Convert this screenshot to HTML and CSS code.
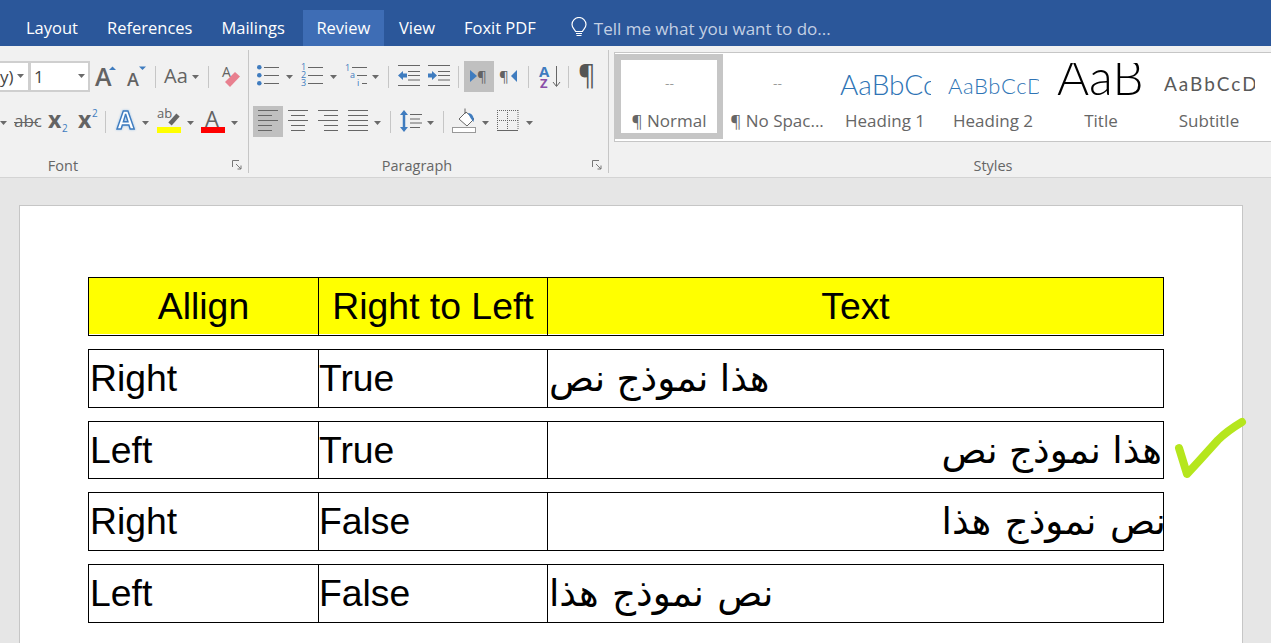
FILE: index.html
```html
<!DOCTYPE html>
<html lang="en">
<head>
<meta charset="utf-8">
<title>Word</title>
<link rel="stylesheet" href="styles.css">
</head>
<body>
<header class="tabs">
  <span class="tab">Layout</span>
  <span class="tab">References</span>
  <span class="tab">Mailings</span>
  <span class="tab tab-active">Review</span>
  <span class="tab">View</span>
  <span class="tab">Foxit PDF</span>
  <span class="tell">
    <svg width="16" height="22" viewBox="0 0 16 22"><path d="M4.6 14.5C3.6 12 1 10.800 1 7.500A7 7 0 0 1 15 7.500C15 10.800 12.400 12 11.400 14.500ZM5 16.500H11M5.500 18.500H10.500" fill="none" stroke="#fff" stroke-width="1.200"/></svg>
    Tell me what you want to do...
  </span>
</header>

<section class="ribbon">
  <div class="group group-font">
    <div class="row">
      <div class="combo combo-a"><span class="combo-text">y)</span><svg width="8" height="5"><path class="caret" d="M0 0H7L3.500 4Z"/></svg></div>
      <div class="combo combo-b"><span class="combo-text">1</span><svg width="8" height="5"><path class="caret" d="M0 0H7L3.500 4Z"/></svg></div>
      <svg width="32" height="31"><text class="ic ic-semi" x="5" y="25" font-size="25">A</text><path class="blue" d="M19 9L22.500 5.500L26 9Z"/></svg>
      <svg width="28" height="31"><text class="ic ic-semi" x="5" y="25" font-size="18">A</text><path class="blue" d="M17 5.500H24L20.500 9Z"/></svg>
      <i class="sep"></i>
      <svg width="42" height="31"><text class="ic" x="3" y="22" font-size="20">Aa</text><path class="caret" d="M31 14H38L34.500 18Z"/></svg>
      <i class="sep"></i>
      <svg width="34" height="31"><text class="ic" x="8" y="16" font-size="14">A</text><path d="M11 21L21 11L26 15.500L16 26Z" fill="#e8808f"/></svg>
    </div>
    <div class="row">
      <svg width="10" height="31"><path class="caret" d="M0 15H7L3.500 19Z"/></svg>
      <svg width="34" height="31"><text class="ic" x="4" y="21" font-size="17">abc</text><path class="line" d="M4 16.500H28"/></svg>
      <svg width="30" height="31"><text class="ic ic-bold" x="4" y="22" font-size="23">x</text><text class="ic-blue" x="18" y="26" font-size="10">2</text></svg>
      <svg width="26" height="31"><text class="ic ic-bold" x="4" y="22" font-size="23">x</text><text class="ic-blue" x="18" y="11" font-size="10">2</text></svg>
      <i class="sep"></i>
      <svg width="43" height="31"><text class="ic-outline" x="6" y="23" font-size="25">A</text><path class="caret" d="M31 15H38L34.500 19Z"/></svg>
      <svg width="44" height="31"><text class="ic" x="3" y="12" font-size="13">ab</text><path d="M16 18L24 9" stroke="#666" stroke-width="4.500" fill="none"/><rect x="3" y="21" width="24" height="6" fill="#ff0"/><path class="caret" d="M33 15H40L36.500 19Z"/></svg>
      <svg width="50" height="31"><text class="ic" x="7" y="21" font-size="22">A</text><rect x="3" y="21" width="24" height="6" fill="#f00"/><path class="caret" d="M33 15H40L36.500 19Z"/></svg>
    </div>
    <span class="group-label">Font</span>
    <svg class="launcher" width="10" height="10"><path d="M.5 7V.5H7M4 4L9 9M9 5.500V9H5.500" fill="none" stroke="#777"/></svg>
  </div>

  <div class="group group-para">
    <div class="row">
      <svg width="44" height="31"><g class="blue"><circle cx="6.300" cy="6.300" r="2.300"/><circle cx="6.300" cy="14.300" r="2.300"/><circle cx="6.300" cy="22.300" r="2.300"/></g><path class="line" d="M11 6.500H26M11 14.500H26M11 22.500H26"/><path class="caret" d="M33 14H40L36.500 18Z"/></svg>
      <svg width="43" height="31"><g class="ic-blue" font-size="9"><text x="4" y="9">1</text><text x="4" y="17">2</text><text x="4" y="25">3</text></g><path class="line" d="M11 6.500H26M11 14.500H26M11 22.500H26"/><path class="caret" d="M33 14H40L36.500 18Z"/></svg>
      <svg width="43" height="31"><g class="ic-blue" font-size="9"><text x="5" y="10">1</text><text x="10" y="17">a</text><text x="17" y="25">i</text></g><path class="line" d="M12 6.500H27M17 14.500H27M22 22.500H27"/><path class="caret" d="M32 14H39L35.500 18Z"/></svg>
      <i class="sep"></i>
      <svg width="30" height="31"><path class="line" d="M4 4.500H26M14 10.500H26M14 14.500H26M14 19H26M4 24.500H26"/><path class="blue" d="M4 14.500L9 10V12.500H13V16.500H9V19Z"/></svg>
      <svg width="29" height="31"><path class="line" d="M4 4.500H26M14 10.500H26M14 14.500H26M14 19H26M4 24.500H26"/><path class="blue" d="M13 14.500L8 10V12.500H4V16.500H8V19Z"/></svg>
      <i class="sep"></i>
      <svg class="on" width="30" height="31"><path class="blue" d="M6 9L13 15L6 21Z"/><text class="ic" x="13" y="21" font-size="15">¶</text></svg>
      <svg width="29" height="31"><text class="ic" x="5" y="21" font-size="15">¶</text><path class="blue" d="M23 9L17 15L23 21Z"/></svg>
      <i class="sep"></i>
      <svg width="29" height="31"><text class="ic-sort-a" x="5" y="16" font-size="15">A</text><text class="ic-sort-z" x="6" y="27" font-size="13">Z</text><path class="line" d="M22.500 5V25M19 21L22.500 25.500L26 21"/></svg>
      <i class="sep"></i>
      <svg width="30" height="31"><text class="ic ic-pil" x="4" y="24" font-size="27">¶</text></svg>
    </div>
    <div class="row">
      <svg class="on" width="30" height="31"><path class="line" d="M5 4.500H25M5 9.500H19M5 14.500H25M5 19.500H19M5 24.500H19"/></svg>
      <svg width="30" height="31"><path class="line" d="M5 4.500H25M8 9.500H22M5 14.500H25M8 19.500H22M8 24.500H22"/></svg>
      <svg width="30" height="31"><path class="line" d="M5 4.500H25M11 9.500H25M5 14.500H25M11 19.500H25M11 24.500H25"/></svg>
      <svg width="42" height="31"><path class="line" d="M5 4.500H25M5 9.500H25M5 14.500H25M5 19.500H25M5 24.500H25"/><path class="caret" d="M31 15H38L34.500 19Z"/></svg>
      <i class="sep"></i>
      <svg width="42" height="31"><path d="M8 7V23" stroke="#3f7cbf" stroke-width="2.500"/><path class="blue" d="M4 9L8 4L12 9ZM4 21L8 26L12 21Z"/><path class="line" d="M14 8.500H26M14 13H24M14 17H26M14 21.500H24"/><path class="caret" d="M31 15H38L34.500 19Z"/></svg>
      <i class="sep"></i>
      <svg width="44" height="31"><path d="M10 13L17 6L25 13L18 20Z" fill="#fff" stroke="#666"/><path d="M16 8V2.500" stroke="#666" fill="none"/><path class="blue" d="M19 7C23 7 25.500 11 24.500 16L21.500 12Z"/><rect x="3.500" y="21.500" width="23" height="5" fill="#fff" stroke="#999"/><path class="caret" d="M33 15H40L36.500 19Z"/></svg>
      <svg width="47" height="31"><path d="M4.500 4V24M14.500 4V24M25 4V24M4 4.500H25M4 14.500H25" fill="none" stroke="#666" stroke-dasharray="1 1"/><path class="line" d="M4 24.500H25"/><path class="caret" d="M33 15H40L36.500 19Z"/></svg>
    </div>
    <span class="group-label">Paragraph</span>
    <svg class="launcher" width="10" height="10"><path d="M.5 7V.5H7M4 4L9 9M9 5.500V9H5.500" fill="none" stroke="#777"/></svg>
  </div>

  <div class="group group-styles">
    <div class="gallery">
      <div class="style style-on"><span class="preview pv-dash">--</span><span class="style-label">¶ Normal</span></div>
      <div class="style"><span class="preview pv-dash">--</span><span class="style-label">¶ No Spac...</span></div>
      <div class="style"><span class="preview pv-h1">AaBbCcDd</span><span class="style-label">Heading 1</span></div>
      <div class="style"><span class="preview pv-h2">AaBbCcDd</span><span class="style-label">Heading 2</span></div>
      <div class="style"><span class="preview pv-title">AaB</span><span class="style-label">Title</span></div>
      <div class="style"><span class="preview pv-sub">AaBbCcDd</span><span class="style-label">Subtitle</span></div>
    </div>
    <span class="group-label">Styles</span>
  </div>
</section>

<main class="canvas">
  <article class="page">
    <div class="doc-table">
      <div class="doc-row doc-head"><div class="cell">Allign</div><div class="cell">Right to Left</div><div class="cell">Text</div></div>
      <div class="doc-row"><div class="cell">Right</div><div class="cell">True</div><div class="cell ar ar-left" dir="rtl">هذا نموذج نص</div></div>
      <div class="doc-row"><div class="cell">Left</div><div class="cell">True</div><div class="cell ar ar-right" dir="rtl">هذا نموذج نص</div></div>
      <div class="doc-row"><div class="cell">Right</div><div class="cell">False</div><div class="cell ar ar-right ar-over ar-wide" dir="rtl">نص نموذج هذا</div></div>
      <div class="doc-row"><div class="cell">Left</div><div class="cell">False</div><div class="cell ar ar-left ar-wide" dir="rtl">نص نموذج هذا</div></div>
    </div>
    <svg class="check" width="80" height="70" viewBox="0 0 80 70"><path d="M5 31L13 57L25 44L44 23C50 17 58 11 68 5" fill="none" stroke="#b5e61d" stroke-width="8" stroke-linecap="round" stroke-linejoin="round"/></svg>
  </article>
</main>
</body>
</html>
```
FILE: styles.css
```css
* { box-sizing: border-box; }
html, body { margin: 0; height: 100%; overflow: hidden; }
body { display: flex; flex-direction: column; font-family: "Open Sans", "Liberation Sans", sans-serif; background: #e6e6e6; }

.tabs { flex: none; height: 46px; background: #2b579a; display: flex; align-items: flex-end; padding-left: 13px; gap: 3px; color: #fff; font-size: 16.5px; }
.tab { height: 36px; line-height: 36px; padding: 0 13px; white-space: nowrap; }
.tab-active { background: #3e6db5; min-width: 81px; margin-left: 2px; margin-right: -1px; text-align: center; }
.tell { display: flex; align-items: center; gap: 7px; height: 36px; margin-left: 19px; color: #c3d0e4; font-size: 17px; white-space: nowrap; }

.ribbon { flex: none; height: 132px; background: #f1f1f1; border-bottom: 1px solid #d4d4d4; display: flex; }
.group { position: relative; padding-top: 15px; }
.group::after { content: ""; position: absolute; right: 0; top: 4px; height: 123px; width: 1px; background: #c6c6c6; }
.group-font { width: 249px; }
.group-para { width: 360px; padding-left: 4px; }
.group-styles { flex: 1; padding: 6px 0 0 5px; }
.group-styles::after { display: none; }
.row { display: flex; height: 31px; margin-bottom: 14px; }
.row svg { flex: none; display: block; }
.on { background: #c0c0c0; }
.sep { flex: none; width: 1px; height: 22px; margin: 5px 5px 0; background: #c6c6c6; }
.group-label { position: absolute; left: 0; right: 0; bottom: 1px; text-align: center; font-size: 14.5px; line-height: 20px; color: #666; }
.group-font .group-label { padding-right: 123px; }
.group-para .group-label { padding-right: 24px; }
.group-styles .group-label { padding-left: 106px; }
.launcher { position: absolute; right: 7px; bottom: 7px; }

.caret { fill: #6a6a6a; }
.blue { fill: #3f7cbf; }
.line { fill: none; stroke: #666; stroke-width: 1; }
.ic { fill: #636363; font-family: "Open Sans", sans-serif; }
.ic-semi { font-weight: 600; }
.ic-bold { font-weight: 700; }
.ic-pil { fill: #555; }
.ic-blue { fill: #3f7cbf; font-family: "Open Sans", sans-serif; }
.ic-outline { fill: #fff; stroke: #3f7cbf; stroke-width: 1.4; font-family: "Open Sans", sans-serif; font-weight: 700; filter: drop-shadow(0 0 1px #9cc3e8); }
.ic-sort-a { fill: #3f7cbf; font-weight: 700; font-family: "Open Sans", sans-serif; }
.ic-sort-z { fill: #8a4fa8; font-weight: 700; font-family: "Open Sans", sans-serif; }

.combo { height: 31px; background: #fff; border: 2px solid #cfcfcf; display: flex; align-items: center; justify-content: space-between; color: #444; font-size: 17px; flex: none; }
.combo-a { width: 30px; border-left: 0; padding: 0 3px 0 0; }
.combo-b { width: 60px; padding: 0 2px 0 3px; border-left-width: 1px; }
.combo-text { line-height: 1; }

.gallery { height: 90px; background: #fff; border: 1px solid #c6c6c6; border-right: 0; display: flex; }
.style { width: 108px; height: 85px; margin-top: 1px; display: flex; flex-direction: column; align-items: center; flex: none; padding-top: 9px; }
.style-on { box-shadow: inset 0 0 0 6px #c6c6c6; }
.preview { display: block; width: 91px; height: 48px; margin-left: 1px; overflow: hidden; white-space: nowrap; font-family: Lato, sans-serif; font-weight: 300; }
.pv-dash { font-size: 14px; line-height: 40px; color: #777; text-align: center; font-family: "Open Sans", sans-serif; }
.pv-h1 { font-size: 28px; line-height: 42px; color: #2e74b5; }
.pv-h2 { font-size: 22px; line-height: 45px; color: #2e74b5; letter-spacing: .6px; }
.pv-title { font-size: 49px; line-height: 26px; color: #000; padding-left: 1px; }
.pv-sub { font-size: 19px; line-height: 41px; color: #595959; letter-spacing: 2px; font-weight: 400; }
.style-label { font-size: 17px; line-height: 20px; color: #666; white-space: nowrap; }

.canvas { flex: 1; min-height: 0; padding: 27px 28px 0 19px; }
.page { position: relative; height: 100%; background: #fff; border: 1px solid #c6c6c6; border-bottom: 0; padding: 71px 0 0 68px; }
.doc-table { display: flex; flex-direction: column; gap: 13px; width: 1076px; font-family: "Liberation Sans", Arial, sans-serif; font-size: 37.33px; color: #000; }
.doc-row { display: grid; grid-template-columns: 230px 229px 617px; height: 58.75px; }
.cell { border: 1px solid #000; border-right: 0; line-height: 56px; padding-left: 1px; white-space: nowrap; }
.cell:nth-child(2) { padding-left: 0; }
.cell:last-child { border-right: 1px solid #000; }
.doc-head .cell { background: #ff0; text-align: center; padding-left: 0; box-shadow: inset 0 -1px #fff; }
.ar { font-family: "Liberation Sans", "DejaVu Sans", sans-serif; word-spacing: 1px; }
.ar-left { text-align: left; }
.ar-right { text-align: right; padding-right: 1px; }
.ar-over { padding-right: 0; text-indent: -3px; }
.ar-wide { word-spacing: 3px; }
.check { position: absolute; left: 1154px; top: 211px; }
```
